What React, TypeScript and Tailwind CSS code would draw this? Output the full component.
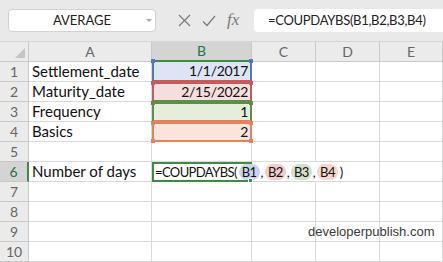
type RangeCell = {
  value: string;
  bg: string;
  side: string;
  top: string;
  bottom: string;
  dot: string;
};

const labels = ["Settlement_date", "Maturity_date", "Frequency", "Basics"];

const ranges: RangeCell[] = [
  { value: "1/1/2017", bg: "bg-[#dde4f6]", side: "border-x-[#5275c4]", top: "border-t-[#3f8a45]", bottom: "border-b-[#c65b5b]", dot: "bg-[#5275c4]" },
  { value: "2/15/2022", bg: "bg-[#f7dede]", side: "border-x-[#c65b5b]", top: "border-t-[#c65b5b]", bottom: "border-b-[#5d8f4b]", dot: "bg-[#c65b5b]" },
  { value: "1", bg: "bg-[#e5eedd]", side: "border-x-[#5d8f4b]", top: "border-t-[#5d8f4b]", bottom: "border-b-[#e4825f]", dot: "bg-[#5d8f4b]" },
  { value: "2", bg: "bg-[#fbe4dc]", side: "border-x-[#e4825f]", top: "border-t-[#e4825f]", bottom: "border-b-[#e4825f]", dot: "bg-[#e4825f]" },
];

const pills = [
  { ref: "B1", bg: "bg-[#cad4ef]" },
  { ref: "B2", bg: "bg-[#f1cbcb]" },
  { ref: "B3", bg: "bg-[#d3dfca]" },
  { ref: "B4", bg: "bg-[#f8d6cb]" },
];

const cell = "border-r border-b border-[#dadada] bg-white";
const rowHead = "flex items-center justify-center border-r border-b border-[#c9c9c9] bg-[#ebebeb] text-[14px] text-[#666]";

function EmptyCells() {
  return (
    <>
      <div className={cell} />
      <div className={cell} />
      <div className={cell} />
    </>
  );
}

export default function App() {
  return (
    <div className="w-[443px] h-[262px] overflow-hidden bg-white font-['Lato',sans-serif] text-[#111]">
      {/* formula bar */}
      <div className="h-[42px] bg-[#e9e9e9] flex items-center border-b border-[#d6d6d6]">
        <div className="relative ml-[8px] w-[148px] h-[23px] rounded-[4px] bg-white border border-[#d2d2d2] flex items-center justify-center text-[13px] text-[#222]">
          AVERAGE
          <span className="absolute right-[3px] top-[9px] w-0 h-0 border-x-[3px] border-x-transparent border-t-[3px] border-t-[#aaa]" />
        </div>
        <div className="ml-[22px] flex items-center gap-[11px] text-[#7a7a7a]">
          <svg width="13" height="13" viewBox="0 0 13 13" stroke="currentColor" strokeWidth="1.2" fill="none">
            <path d="M1 1 L12 12 M12 1 L1 12" />
          </svg>
          <svg width="14" height="12" viewBox="0 0 14 12" stroke="currentColor" strokeWidth="1.2" fill="none">
            <path d="M1 6.5 L5 10.5 L13 1" />
          </svg>
          <span className="font-['Liberation_Serif',serif] italic text-[17px] leading-none -mt-[2px]">fx</span>
        </div>
        <div className="ml-auto w-[189px] h-[23px] rounded-l-[4px] bg-white flex items-center pl-[14px] text-[13px] tracking-[-0.3px] text-[#222] whitespace-nowrap">
          =COUPDAYBS(B1,B2,B3,B4)
        </div>
      </div>

      {/* sheet */}
      <div className="relative grid grid-cols-[29px_123px_100px_64px_64px_1fr] auto-rows-[20px] text-[15px] leading-none">
        <div className="relative border-r border-b border-[#c9c9c9] bg-[#ebebeb]">
          <span className="absolute right-[3px] bottom-[3px] w-0 h-0 border-l-[10px] border-l-transparent border-b-[10px] border-b-[#c4c4c4]" />
        </div>
        <div className={rowHead}>A</div>
        <div className="flex items-center justify-center bg-[#d4d4d4] border-r border-[#c9c9c9] border-b-2 border-b-[#3f8a45] text-[14px] text-[#217346]">B</div>
        <div className={rowHead}>C</div>
        <div className={rowHead}>D</div>
        <div className={rowHead}>E</div>

        {ranges.map((r, i) => (
          <div key={r.value} className="contents">
            <div className={rowHead}>{i + 1}</div>
            <div className={`${cell} flex items-center pl-[3px]`}>{labels[i]}</div>
            <div className={`relative flex items-center justify-end pr-[2px] text-[14px] tracking-[-0.3px] border-x-2 ${i === 0 ? "border-t-0" : "border-t-2"} border-b-2 ${r.bg} ${r.side} ${r.top} ${r.bottom}`}>
              {r.value}
              <span className={`absolute -left-[3px] -top-[3px] w-[4px] h-[4px] ${r.dot}`} />
              <span className={`absolute -right-[3px] -top-[3px] w-[4px] h-[4px] ${r.dot}`} />
              {i === 3 && <span className={`absolute -left-[3px] -bottom-[3px] w-[4px] h-[4px] ${r.dot}`} />}
              {i === 3 && <span className={`absolute -right-[3px] -bottom-[3px] w-[4px] h-[4px] ${r.dot}`} />}
            </div>
            <EmptyCells />
          </div>
        ))}

        <div className={rowHead}>5</div>
        <div className={cell} />
        <div className={cell} />
        <EmptyCells />

        <div className="flex items-center justify-center bg-[#d4d4d4] border-b border-[#c9c9c9] border-r-2 border-r-[#3f8a45] text-[14px] text-[#217346]">6</div>
        <div className={`${cell} flex items-center pl-[3px]`}>Number of days</div>
        <div className="relative z-10 flex items-center pl-[1px] border-2 border-[#3f8a45] bg-white whitespace-nowrap text-[13px] tracking-[-0.6px]">
          =COUPDAYBS(
          {pills.map((p, i) => (
            <span key={p.ref} className="flex items-center">
              <span className={`${i === 0 ? "ml-[2px]" : "ml-[2px]"} px-[3px] h-[16px] flex items-center rounded-full ${p.bg}`}>{p.ref}</span>
              {i < 3 ? <span className="ml-[1px]">,</span> : <span className="ml-[2px]">)</span>}
            </span>
          ))}
          <span className="absolute -right-[3px] -bottom-[3px] w-[5px] h-[5px] bg-[#3f8a45] border border-white" />
        </div>
        <div className="border-b border-[#dadada] bg-white" />
        <div className={cell} />
        <div className={cell} />

        {[7, 8, 9, 10].map((n) => (
          <div key={n} className="contents">
            <div className={rowHead}>{n}</div>
            <div className={cell} />
            <div className={cell} />
            <EmptyCells />
          </div>
        ))}

        <span className="absolute left-[308px] top-[183px] font-['Liberation_Sans',sans-serif] text-[13px] text-[#3a3a3a]">developerpublish.com</span>
      </div>
    </div>
  );
}
